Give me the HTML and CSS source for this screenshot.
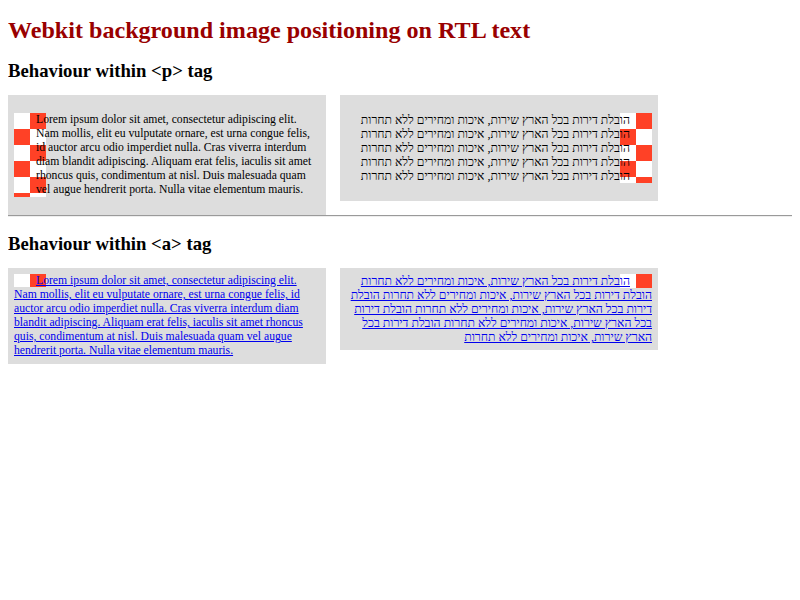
FILE: index.html
```html
<!DOCTYPE html>
<html>
<head>
<meta charset="utf-8">
<title>Webkit background image positioning on RTL text</title>
<link rel="stylesheet" href="styles.css">
</head>
<body>
<h1 class="title">Webkit background image positioning on RTL text</h1>
<h2 class="sub">Behaviour within &lt;p&gt; tag</h2>
<div class="row">
  <div class="box"><p class="chk chk-ltr">Lorem ipsum dolor sit amet, consectetur adipiscing elit. Nam mollis, elit eu vulputate ornare, est urna congue felis, id auctor arcu odio imperdiet nulla. Cras viverra interdum diam blandit adipiscing. Aliquam erat felis, iaculis sit amet rhoncus quis, condimentum at nisl. Duis malesuada quam vel augue hendrerit porta. Nulla vitae elementum mauris.</p></div>
  <div class="box box-rtl" dir="rtl"><p class="chk chk-rtl">הובלת דירות בכל הארץ שירות, איכות ומחירים ללא תחרות<br>הובלת דירות בכל הארץ שירות, איכות ומחירים ללא תחרות<br>הובלת דירות בכל הארץ שירות, איכות ומחירים ללא תחרות<br>הובלת דירות בכל הארץ שירות, איכות ומחירים ללא תחרות<br>הובלת דירות בכל הארץ שירות, איכות ומחירים ללא תחרות</p></div>
</div>
<hr class="rule">
<h2 class="sub">Behaviour within &lt;a&gt; tag</h2>
<div class="row">
  <div class="box"><a href="#" class="chk chk-ltr">Lorem ipsum dolor sit amet, consectetur adipiscing elit. Nam mollis, elit eu vulputate ornare, est urna congue felis, id auctor arcu odio imperdiet nulla. Cras viverra interdum diam blandit adipiscing. Aliquam erat felis, iaculis sit amet rhoncus quis, condimentum at nisl. Duis malesuada quam vel augue hendrerit porta. Nulla vitae elementum mauris.</a></div>
  <div class="box box-rtl" dir="rtl"><a href="#" class="chk chk-rtl">הובלת דירות בכל הארץ שירות, איכות ומחירים ללא תחרות הובלת דירות בכל הארץ שירות, איכות ומחירים ללא תחרות הובלת דירות בכל הארץ שירות, איכות ומחירים ללא תחרות הובלת דירות בכל הארץ שירות, איכות ומחירים ללא תחרות הובלת דירות בכל הארץ שירות, איכות ומחירים ללא תחרות</a></div>
</div>
</body>
</html>
```
FILE: styles.css
```css
html, body {
  background: #ffffff;
}
body {
  margin: 8px;
  font-family: "Liberation Serif", "Times New Roman", serif;
  color: #000000;
}
.title {
  font-size: 24.1px;
  font-weight: bold;
  color: #990000;
  margin: 9px 0 16px;
}
.sub {
  font-size: 18.72px;
  font-weight: bold;
  margin: 16px 0 13px;
}
.row {
  display: flex;
  align-items: flex-start;
  gap: 14px;
}
.box {
  width: 306px;
  padding: 6px;
  background: #dddddd;
  font-size: 11.7px;
  line-height: 14px;
}
.box-rtl {
  font-size: 12.2px;
}
.box p {
  margin: 12px 0;
}
.chk {
  background-image: conic-gradient(#ff4126 0 25%, #ffffff 0 50%, #ff4126 0 75%, #ffffff 0);
  background-size: 32px 32px;
  background-repeat: repeat-y;
}
.chk-ltr {
  background-position: left top;
  padding-left: 22px;
}
.chk-rtl {
  background-position: right top;
  padding-right: 22px;
}
a.chk {
  color: #0000ee;
}
.rule {
  margin: 0 0 16px;
  height: 0;
  border: 0;
  border-top: 1px solid #9a9a9a;
  border-bottom: 1px solid #eeeeee;
}
```
